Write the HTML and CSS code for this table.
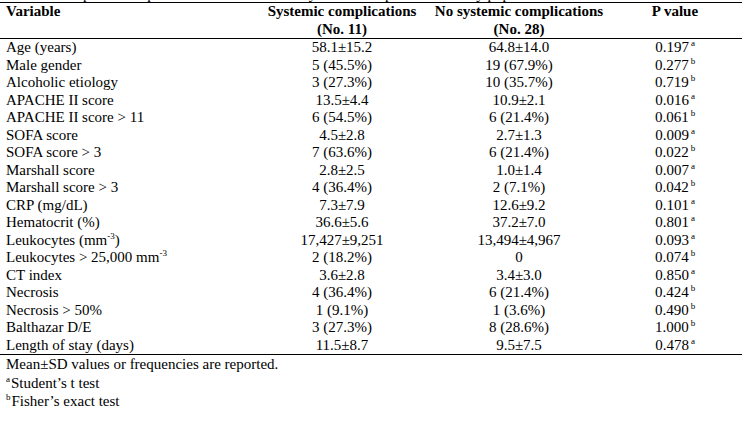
FILE: index.html
```html
<!DOCTYPE html>
<html lang="en">
<head>
<meta charset="utf-8">
<title>Systemic complications table</title>
<link rel="stylesheet" href="styles.css">
</head>
<body>
<div class="caption-clip"><div class="caption">Table 2. Comparison of patients with and without systemic complications: study population</div></div>
<table class="data">
  <colgroup>
    <col class="c1"><col class="c2"><col class="c3"><col class="c4">
  </colgroup>
  <thead>
    <tr>
      <th class="var">Variable</th>
      <th>Systemic complications<br>(No. 11)</th>
      <th>No systemic complications<br>(No. 28)</th>
      <th>P value</th>
    </tr>
  </thead>
  <tbody>
    <tr><td class="var">Age (years)</td><td>58.1±15.2</td><td>64.8±14.0</td><td>0.197<sup class="fn">a</sup></td></tr>
    <tr><td class="var">Male gender</td><td>5 (45.5%)</td><td>19 (67.9%)</td><td>0.277<sup class="fn">b</sup></td></tr>
    <tr><td class="var">Alcoholic etiology</td><td>3 (27.3%)</td><td>10 (35.7%)</td><td>0.719<sup class="fn">b</sup></td></tr>
    <tr><td class="var">APACHE II score</td><td>13.5±4.4</td><td>10.9±2.1</td><td>0.016<sup class="fn">a</sup></td></tr>
    <tr><td class="var">APACHE II score &gt; 11</td><td>6 (54.5%)</td><td>6 (21.4%)</td><td>0.061<sup class="fn">b</sup></td></tr>
    <tr><td class="var">SOFA score</td><td>4.5±2.8</td><td>2.7±1.3</td><td>0.009<sup class="fn">a</sup></td></tr>
    <tr><td class="var">SOFA score &gt; 3</td><td>7 (63.6%)</td><td>6 (21.4%)</td><td>0.022<sup class="fn">b</sup></td></tr>
    <tr><td class="var">Marshall score</td><td>2.8±2.5</td><td>1.0±1.4</td><td>0.007<sup class="fn">a</sup></td></tr>
    <tr><td class="var">Marshall score &gt; 3</td><td>4 (36.4%)</td><td>2 (7.1%)</td><td>0.042<sup class="fn">b</sup></td></tr>
    <tr><td class="var">CRP (mg/dL)</td><td>7.3±7.9</td><td>12.6±9.2</td><td>0.101<sup class="fn">a</sup></td></tr>
    <tr><td class="var">Hematocrit (%)</td><td>36.6±5.6</td><td>37.2±7.0</td><td>0.801<sup class="fn">a</sup></td></tr>
    <tr><td class="var">Leukocytes (mm<sup class="exp">-3</sup>)</td><td>17,427±9,251</td><td>13,494±4,967</td><td>0.093<sup class="fn">a</sup></td></tr>
    <tr><td class="var">Leukocytes &gt; 25,000 mm<sup class="exp">-3</sup></td><td>2 (18.2%)</td><td>0</td><td>0.074<sup class="fn">b</sup></td></tr>
    <tr><td class="var">CT index</td><td>3.6±2.8</td><td>3.4±3.0</td><td>0.850<sup class="fn">a</sup></td></tr>
    <tr><td class="var">Necrosis</td><td>4 (36.4%)</td><td>6 (21.4%)</td><td>0.424<sup class="fn">b</sup></td></tr>
    <tr><td class="var">Necrosis &gt; 50%</td><td>1 (9.1%)</td><td>1 (3.6%)</td><td>0.490<sup class="fn">b</sup></td></tr>
    <tr><td class="var">Balthazar D/E</td><td>3 (27.3%)</td><td>8 (28.6%)</td><td>1.000<sup class="fn">b</sup></td></tr>
    <tr><td class="var">Length of stay (days)</td><td>11.5±8.7</td><td>9.5±7.5</td><td>0.478<sup class="fn">a</sup></td></tr>
  </tbody>
</table>
<div class="notes">
  <p class="note">Mean±SD values or frequencies are reported.</p>
  <p class="note"><sup class="fn-lead">a</sup>Student’s t test</p>
  <p class="note"><sup class="fn-lead">b</sup>Fisher’s exact test</p>
</div>
</body>
</html>
```

FILE: styles.css
```css
html, body {
  margin: 0;
  padding: 0;
  background: #ffffff;
}

body {
  font-family: "Liberation Serif", "Times New Roman", serif;
  font-size: 15px;
  color: #000000;
}

.caption-clip {
  height: 2px;
  overflow: hidden;
  position: relative;
}

.caption {
  font-size: 15px;
  line-height: 17px;
  margin-top: -14px;
  padding-left: 2px;
  white-space: nowrap;
}

.data {
  width: 742px;
  border-collapse: collapse;
  table-layout: fixed;
  border-top: 1px solid #000;
  border-bottom: 1px solid #000;
}

.c1 { width: 254px; }
.c2 { width: 176px; }
.c3 { width: 178px; }
.c4 { width: 134px; }

.data th,
.data td {
  padding: 0;
  line-height: 17.5px;
  height: 17.5px;
  text-align: center;
  vertical-align: top;
  font-weight: normal;
  white-space: nowrap;
}

.data thead th {
  font-weight: bold;
  border-bottom: 1px solid #000;
  padding-bottom: 0;
}

.data .var {
  text-align: left;
  padding-left: 6px;
}

.fn {
  font-size: 9px;
  line-height: 0;
  vertical-align: 6px;
  margin-left: 2px;
}

.exp {
  font-size: 9px;
  line-height: 0;
  vertical-align: 6px;
}

.notes {
  padding-left: 6px;
}

.note {
  margin: 0;
  line-height: 18.5px;
}

.fn-lead {
  font-size: 9px;
  line-height: 0;
  vertical-align: 6px;
  margin-right: 1px;
}
```
